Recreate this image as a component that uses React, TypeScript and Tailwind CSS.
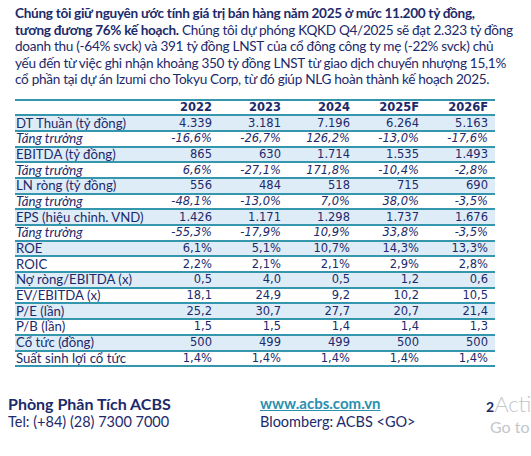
import React from 'react';

type Row = { label: string; values: string[]; italic?: boolean; shaded?: boolean };

const rows: Row[] = [
  { label: 'DT Thuần (tỷ đồng)', values: ['4.339', '3.181', '7.196', '6.264', '5.163'], shaded: true },
  { label: 'Tăng trưởng', values: ['-16,6%', '-26,7%', '126,2%', '-13,0%', '-17,6%'], italic: true },
  { label: 'EBITDA (tỷ đồng)', values: ['865', '630', '1.714', '1.535', '1.493'], shaded: true },
  { label: 'Tăng trưởng', values: ['6,6%', '-27,1%', '171,8%', '-10,4%', '-2,8%'], italic: true },
  { label: 'LN ròng (tỷ đồng)', values: ['556', '484', '518', '715', '690'], shaded: true },
  { label: 'Tăng trưởng', values: ['-48,1%', '-13,0%', '7,0%', '38,0%', '-3,5%'], italic: true },
  { label: 'EPS (hiệu chỉnh. VND)', values: ['1.426', '1.171', '1.298', '1.737', '1.676'], shaded: true },
  { label: 'Tăng trưởng', values: ['-55,3%', '-17,9%', '10,9%', '33,8%', '-3,5%'], italic: true },
  { label: 'ROE', values: ['6,1%', '5,1%', '10,7%', '14,3%', '13,3%'], shaded: true },
  { label: 'ROIC', values: ['2,2%', '2,1%', '2,1%', '2,9%', '2,8%'] },
  { label: 'Nợ ròng/EBITDA (x)', values: ['0,5', '4,0', '0,5', '1,2', '0,6'], shaded: true },
  { label: 'EV/EBITDA (x)', values: ['18,1', '24,9', '9,2', '10,2', '10,5'] },
  { label: 'P/E (lần)', values: ['25,2', '30,7', '27,7', '20,7', '21,4'], shaded: true },
  { label: 'P/B (lần)', values: ['1,5', '1,5', '1,4', '1,4', '1,3'] },
  { label: 'Cổ tức (đồng)', values: ['500', '499', '499', '500', '500'], shaded: true },
  { label: 'Suất sinh lợi cổ tức', values: ['1,4%', '1,4%', '1,4%', '1,4%', '1,4%'] },
];

const years = ['2022', '2023', '2024', '2025F', '2026F'];

export default function App() {
  return (
    <div className="w-[531px] h-[456px] bg-white overflow-hidden relative text-[#1c2a6b]">
      {/* Summary paragraph, line breaks as in the report */}
      <p className="pl-[15px] pt-[5px] text-[13.6px] leading-[16.5px] tracking-[-0.3px] whitespace-nowrap font-['Lato',sans-serif]">
        <span className="font-bold">Chúng tôi giữ nguyên ước tính giá trị bán hàng năm 2025 ở mức 11.200 tỷ đồng,</span>
        <br />
        <span className="font-bold">tương đương 76% kế hoạch.</span> Chúng tôi dự phóng KQKD Q4/2025 sẽ đạt 2.323 tỷ đồng
        <br />
        doanh thu (-64% svck) và 391 tỷ đồng LNST của cổ đông công ty mẹ (-22% svck) chủ
        <br />
        yếu đến từ việc ghi nhận khoảng 350 tỷ đồng LNST từ giao dịch chuyển nhượng 15,1%
        <br />
        cổ phần tại dự án Izumi cho Tokyu Corp, từ đó giúp NLG hoàn thành kế hoạch 2025.
      </p>

      {/* Financial table */}
      <div className="ml-[15px] mt-[11px] w-[480px] border-t-2 border-[#3597ad]">
        <div className="flex h-[15.7px] items-center border-b-2 border-[#3597ad] bg-white">
          <div className="w-[128px] shrink-0" />
          {years.map((y) => (
            <div key={y} className="w-[69px] shrink-0 text-right font-bold text-[11.5px] leading-[13px] font-['DejaVu_Sans',sans-serif]">
              {y}
            </div>
          ))}
        </div>
        {rows.map((r, i) => (
          <div
            key={i}
            className={`flex h-[15.7px] items-center border-b-2 border-[#3597ad] ${r.shaded ? 'bg-[#deecf8]' : 'bg-white'}`}
          >
            <div className={`w-[128px] shrink-0 pl-[1px] text-[13.2px] leading-[13px] font-['Lato',sans-serif] whitespace-nowrap ${r.italic ? 'italic' : ''}`}>
              {r.label}
            </div>
            {r.values.map((v, j) => (
              <div
                key={j}
                className={`w-[69px] shrink-0 text-right text-[11.5px] leading-[13px] font-['DejaVu_Sans',sans-serif] ${r.italic ? 'italic' : ''}`}
              >
                {v}
              </div>
            ))}
          </div>
        ))}
      </div>

      {/* Footer */}
      <div className="flex mt-[27px] pl-[8px] font-['Lato',sans-serif] whitespace-nowrap">
        <div className="w-[252px] shrink-0">
          <div className="font-bold text-[16px] leading-[19px]">Phòng Phân Tích ACBS</div>
          <div className="text-[14.5px] leading-[18px]">Tel: (+84) (28) 7300 7000</div>
        </div>
        <div className="w-[226px] shrink-0">
          <div className="font-bold text-[15px] leading-[19px] text-[#2a8fb0] underline">www.acbs.com.vn</div>
          <div className="text-[14.5px] leading-[18px]">Bloomberg: ACBS &lt;GO&gt;</div>
        </div>
        <div className="flex flex-col shrink-0">
          <div className="flex items-baseline leading-[19px]">
            <span className="font-bold text-[14px]">2</span>
            <span className="text-[22px] font-light text-[#c4c6cc]">Activ</span>
          </div>
          <div className="text-[16px] text-[#c4c6cc] pl-[4px] -mt-[1px]">Go to</div>
        </div>
      </div>
    </div>
  );
}
